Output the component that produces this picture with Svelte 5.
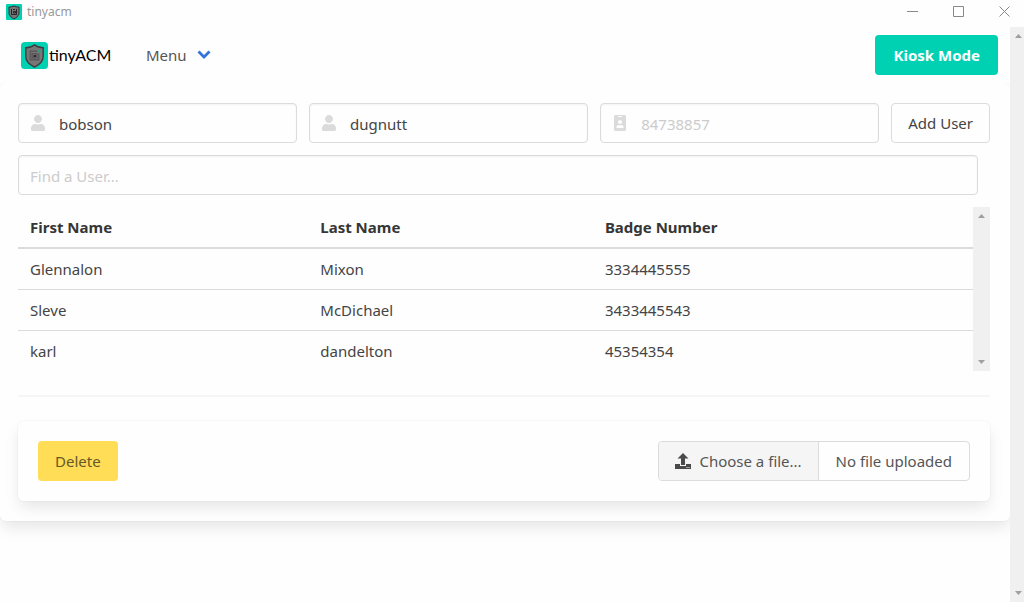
<script>
  let first = $state('bobson');
  let last = $state('dugnutt');
  let badge = $state('');
  let query = $state('');
  const users = [
    { first: 'Glennalon', last: 'Mixon', badge: '3334445555' },
    { first: 'Sleve', last: 'McDichael', badge: '3433445543' },
    { first: 'karl', last: 'dandelton', badge: '45354354' }
  ];
</script>

{#snippet shield(size)}
  <svg class="shield" width={size} height={size} viewBox="0 0 28 28" aria-hidden="true">
    <rect width="28" height="28" rx="4" fill="#00d1b2" />
    <path d="M14 3C11.500 5 8.500 6 5 6V15C5 20 9 23.500 14 26C19 23.500 23 20 23 15V6C19.500 6 16.500 5 14 3Z" fill="#777" stroke="#403c40" stroke-width="1.500" />
    <path d="M17 9.500H9.500V18.500H18.500V12M11.500 12H16.500V16.500H11.500Z" fill="none" stroke="#565256" stroke-width="1.200" />
    <path d="M13 13.500H15.500V15.500H13Z" fill="#252325" />
    <path d="M17.500 8.500L20 11" stroke="#16a58f" stroke-width="1.500" />
  </svg>
{/snippet}

{#snippet tinyShield()}
  <svg width="16" height="16" viewBox="0 0 16 16" aria-hidden="true">
    <rect width="16" height="16" rx="1" fill="#00d1b2" />
    <path d="M3 3H5L8 2L11 3H13V10L11 13L8 15L5 13L3 10Z" fill="#777" stroke="#343034" />
    <path d="M5.500 5V10.500H10.500V5M7 5.500H9M7.500 7.500H9.500V9H7.500Z" fill="none" stroke="#252325" />
  </svg>
{/snippet}

{#snippet person()}
  <svg class="field-icon" viewBox="0 0 448 512" width="14" height="16" aria-hidden="true">
    <path fill="currentColor" d="M224 256c70.700 0 128-57.300 128-128S294.700 0 224 0 96 57.300 96 128s57.300 128 128 128zm89.600 32h-16.700c-22.200 10.200-46.900 16-72.900 16s-50.600-5.800-72.900-16h-16.700C60.200 288 0 348.200 0 422.400V464c0 26.500 21.500 48 48 48h352c26.500 0 48-21.500 48-48v-41.600c0-74.200-60.200-134.400-134.400-134.400z" />
  </svg>
{/snippet}

{#snippet rail()}
  <svg width="17" height="17" viewBox="0 0 17 17" aria-hidden="true"><path d="M5 11L8.500 7L12 11Z" fill="#a0a0a0" /></svg>
  <svg width="17" height="17" viewBox="0 0 17 17" aria-hidden="true"><path d="M5 6L8.500 10L12 6Z" fill="#a0a0a0" /></svg>
{/snippet}

<div class="window">
  <header class="titlebar">
    {@render tinyShield()}
    <span class="title">tinyacm</span>
    <div class="controls">
      <button aria-label="Minimize"><svg width="11" height="11" viewBox="0 0 11 11"><path d="M0 5.500H11" /></svg></button>
      <button aria-label="Maximize"><svg width="11" height="11" viewBox="0 0 11 11"><path d="M.5 .5H10.500V10.500H.5Z" /></svg></button>
      <button aria-label="Close"><svg width="11" height="11" viewBox="0 0 11 11"><path d="M.5 .5L10.500 10.500M10.500 .5L.5 10.500" /></svg></button>
    </div>
  </header>

  <div class="viewport">
    <main>
      <nav>
        <a class="brand" href="#home">{@render shield(27)}<span>tinyACM</span></a>
        <button class="menu">
          Menu
          <svg width="14" height="10" viewBox="0 0 14 10" aria-hidden="true"><path d="M1.500 1.500L7 7L12.500 1.500" fill="none" stroke="#3273dc" stroke-width="2.800" /></svg>
        </button>
        <button class="button primary">Kiosk Mode</button>
      </nav>

      <section class="panel">
        <form class="add" onsubmit={(e) => e.preventDefault()}>
          <label class="field">
            <input type="text" aria-label="First name" bind:value={first} />
            {@render person()}
          </label>
          <label class="field">
            <input type="text" aria-label="Last name" bind:value={last} />
            {@render person()}
          </label>
          <label class="field">
            <input type="text" aria-label="Badge number" placeholder="84738857" bind:value={badge} />
            <svg class="field-icon" viewBox="0 0 384 512" width="14" height="16" aria-hidden="true">
              <path fill="currentColor" d="M336 0H48C21.500 0 0 21.500 0 48v416c0 26.500 21.500 48 48 48h288c26.500 0 48-21.500 48-48V48c0-26.500-21.500-48-48-48zM144 32h96c8.800 0 16 7.200 16 16s-7.200 16-16 16h-96c-8.800 0-16-7.200-16-16s7.200-16 16-16zm48 128c35.300 0 64 28.700 64 64s-28.700 64-64 64-64-28.700-64-64 28.700-64 64-64zm112 236.800c0 10.600-10 19.200-22.400 19.200H102.400C90 416 80 407.400 80 396.800v-19.200c0-31.800 30.100-57.600 67.200-57.600h5c12.300 5.100 25.700 8 39.800 8s27.600-2.900 39.800-8h5c37.100 0 67.200 25.800 67.200 57.600v19.200z" />
            </svg>
          </label>
          <button class="button">Add User</button>
        </form>

        <div class="search">
          <input type="text" aria-label="Find a User" placeholder="Find a User..." bind:value={query} />
        </div>

        <div class="users">
          <table>
            <thead>
              <tr><th>First Name</th><th>Last Name</th><th>Badge Number</th></tr>
            </thead>
            <tbody>
              {#each users as user}
                <tr><td>{user.first}</td><td>{user.last}</td><td>{user.badge}</td></tr>
              {/each}
            </tbody>
          </table>
          <div class="rail">{@render rail()}</div>
        </div>

        <hr />

        <div class="actions">
          <button class="button warning">Delete</button>
          <label class="file">
            <input type="file" />
            <span class="choose">
              <svg viewBox="0 0 16 16" width="16" height="16" aria-hidden="true">
                <path fill="currentColor" d="M8 0L13.500 5.500H10V12H6V5.500H2.500ZM0 11H5V13H11V11H16V16H0ZM11.500 14V15H12.500V14ZM13.500 14V15H14.500V14Z" fill-rule="evenodd" />
              </svg>
              Choose a file...
            </span>
            <span class="filename">No file uploaded</span>
          </label>
        </div>
      </section>
    </main>
    <div class="rail page-rail">{@render rail()}</div>
  </div>
</div>

<style>
  :global(body) {
    margin: 0;
    background: #fefefe;
  }
  .window {
    display: flex;
    flex-direction: column;
    min-height: 100vh;
    font-family: "Noto Sans", "Open Sans", sans-serif;
    font-size: 15px;
    line-height: 24px;
    color: #555;
  }
  .window * {
    box-sizing: border-box;
  }
  svg {
    display: block;
    flex: none;
  }
  button, input {
    font: inherit;
    color: inherit;
  }
  .titlebar {
    display: flex;
    align-items: center;
    height: 27px;
    padding: 0 0 4px 6px;
    gap: 5px;
  }
  .title {
    font-size: 12px;
    color: #999;
  }
  .controls {
    display: flex;
    gap: 6px;
    margin-left: auto;
  }
  .controls button {
    display: flex;
    justify-content: center;
    width: 40px;
    padding: 6px 0;
    border: 0;
    background: none;
  }
  .controls path {
    fill: none;
    stroke: #888;
  }
  .viewport {
    display: flex;
    flex: 1;
  }
  main {
    flex: 1;
    min-width: 0;
  }
  nav {
    position: relative;
    z-index: 1;
    display: flex;
    align-items: center;
    height: 56px;
    padding: 0 12px 0 21px;
    background: #fefefe;
  }
  .brand {
    display: flex;
    align-items: center;
    gap: 1px;
    width: 113px;
    color: #000;
    text-decoration: none;
    font-family: Lato, sans-serif;
    font-size: 16px;
  }
  .menu {
    display: flex;
    align-items: center;
    gap: 10px;
    padding: 8px 12px;
    border: 0;
    background: none;
  }
  .button {
    height: 40px;
    padding: 0 16px;
    border: 1px solid #dbdbdb;
    border-radius: 4px;
    background: #fefefe;
    color: #444;
    white-space: nowrap;
  }
  .primary {
    margin-left: auto;
    border: 0;
    padding: 0 18px;
    background: #00d1b2;
    color: #fff;
    font-weight: 700;
  }
  .warning {
    border: 0;
    padding: 0 17px;
    background: #ffdd57;
    color: #665926;
  }
  .panel, .actions {
    border-radius: 6px;
    background: #fefefe;
    box-shadow: 0 8px 16px -2px rgba(10, 10, 10, 0.1), 0 0 0 1px rgba(10, 10, 10, 0.02);
  }
  .panel {
    padding: 20px 20px 20px 18px;
  }
  .add {
    display: flex;
    gap: 12px;
  }
  .field {
    position: relative;
    flex: 1;
    min-width: 0;
  }
  input[type="text"] {
    display: block;
    width: 100%;
    height: 40px;
    padding: 2px 11px 0;
    border: 1px solid #dbdbdb;
    border-radius: 4px;
    background: #fefefe;
    color: #444;
    box-shadow: inset 0 1px 2px rgba(10, 10, 10, 0.05);
  }
  .field input[type="text"] {
    padding-left: 40px;
  }
  input::placeholder {
    color: #ccc;
    opacity: 1;
  }
  .field-icon {
    position: absolute;
    left: 13px;
    top: 12px;
    color: #dbdbdb;
  }
  .search {
    padding: 12px 12px 12px 0;
  }
  .users {
    display: flex;
  }
  table {
    flex: 1;
    table-layout: fixed;
    border-collapse: separate;
    border-spacing: 0;
    color: #444;
  }
  th, td {
    padding: 8px 12px;
    text-align: left;
  }
  th {
    border-bottom: 2px solid #dbdbdb;
    color: #363636;
    font-weight: 700;
  }
  th:nth-child(1) {
    width: 30.4%;
  }
  th:nth-child(2) {
    width: 29.8%;
  }
  td {
    border-bottom: 1px solid #dbdbdb;
  }
  tbody tr:last-child td {
    border-bottom: 0;
  }
  .rail {
    display: flex;
    flex-direction: column;
    justify-content: space-between;
    flex: none;
    width: 17px;
    background: #f0f0f0;
  }
  .page-rail {
    width: 14px;
    overflow: hidden;
  }
  hr {
    height: 2px;
    margin: 24px 0;
    border: 0;
    background: #f5f5f5;
  }
  .actions {
    display: flex;
    justify-content: space-between;
    padding: 20px;
  }
  .file {
    display: flex;
    position: relative;
    height: 40px;
    border: 1px solid #dbdbdb;
    border-radius: 4px;
    overflow: hidden;
  }
  .file input {
    position: absolute;
    width: 100%;
    height: 100%;
    opacity: 0;
  }
  .choose {
    display: flex;
    align-items: center;
    gap: 8px;
    padding: 0 16px;
    border-right: 1px solid #dbdbdb;
    background: #f5f5f5;
  }
  .choose svg {
    color: #4a4a4a;
  }
  .filename {
    display: flex;
    align-items: center;
    padding: 0 17px;
  }
</style>
